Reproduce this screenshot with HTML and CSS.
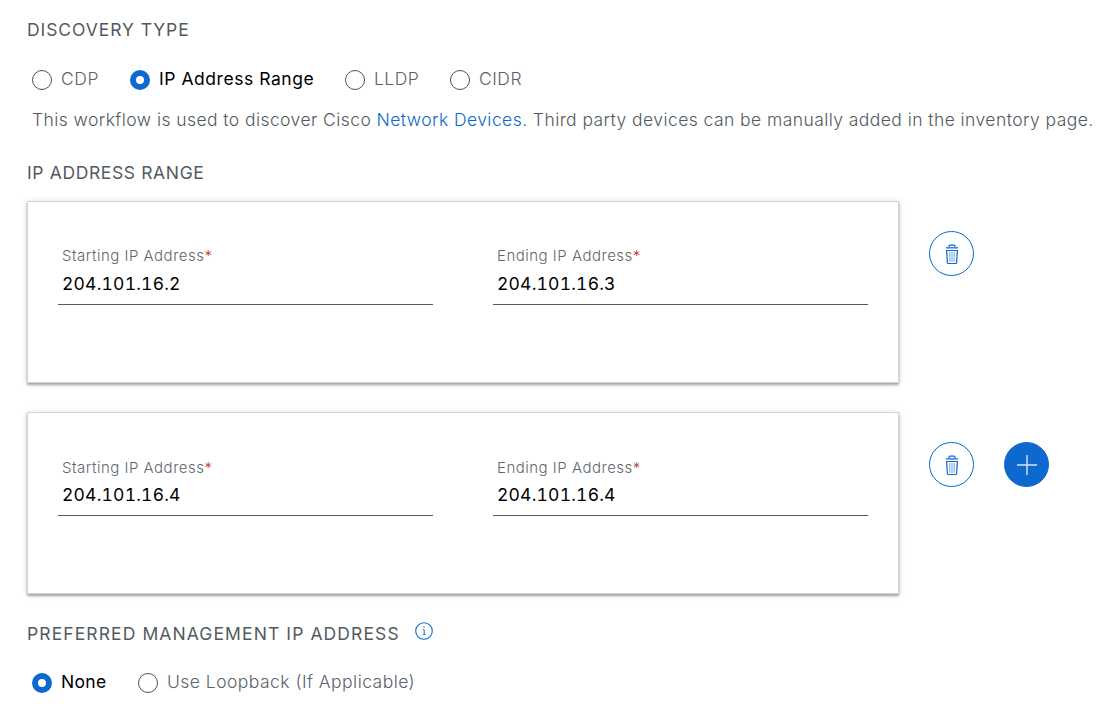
FILE: index.html
```html
<!DOCTYPE html>
<html lang="en">
<head>
<meta charset="utf-8">
<title>Discovery</title>
<link rel="stylesheet" href="styles.css">
</head>
<body>
<main class="form">
  <h2 class="heading heading-type"><span>DISCOVERY TYPE</span></h2>
  <div class="radios radios-type">
    <label class="radio opt-cdp"><i class="dot"></i><span>CDP</span></label>
    <label class="radio checked opt-range"><i class="dot"></i><span>IP Address Range</span></label>
    <label class="radio opt-lldp"><i class="dot"></i><span>LLDP</span></label>
    <label class="radio opt-cidr"><i class="dot"></i><span>CIDR</span></label>
  </div>
  <p class="note">This workflow is used to discover Cisco <a class="link">Network Devices</a>. Third party devices can be manually added in the inventory page.</p>
  <h2 class="heading heading-range"><span>IP ADDRESS RANGE</span></h2>

  <section class="row">
    <div class="card">
      <div class="field">
        <div class="label">Starting IP Address<b class="req">*</b></div>
        <div class="value">204.101.16.2</div>
      </div>
      <div class="field">
        <div class="label">Ending IP Address<b class="req">*</b></div>
        <div class="value">204.101.16.3</div>
      </div>
    </div>
    <div class="actions">
      <button class="round" aria-label="Delete">
        <svg class="trash" viewBox="0 0 14 21"><path d="M4 3V2.1Q4 1.2 4.9 1.2H9.1Q10 1.2 10 2.1V3"/><path class="lid" d="M1 3.8H13"/><path d="M1.6 6.5H12.4L11.6 18.6Q11.5 19.5 10.6 19.5H3.4Q2.5 19.5 2.4 18.6Z"/><path class="ribs" d="M4.8 8V18M7 8V18M9.2 8V18"/></svg>
      </button>
    </div>
  </section>

  <section class="row row-last">
    <div class="card">
      <div class="field">
        <div class="label">Starting IP Address<b class="req">*</b></div>
        <div class="value">204.101.16.4</div>
      </div>
      <div class="field">
        <div class="label">Ending IP Address<b class="req">*</b></div>
        <div class="value">204.101.16.4</div>
      </div>
    </div>
    <div class="actions">
      <button class="round" aria-label="Delete">
        <svg class="trash" viewBox="0 0 14 21"><path d="M4 3V2.1Q4 1.2 4.9 1.2H9.1Q10 1.2 10 2.1V3"/><path class="lid" d="M1 3.8H13"/><path d="M1.6 6.5H12.4L11.6 18.6Q11.5 19.5 10.6 19.5H3.4Q2.5 19.5 2.4 18.6Z"/><path class="ribs" d="M4.8 8V18M7 8V18M9.2 8V18"/></svg>
      </button>
      <button class="round solid" aria-label="Add">
        <svg class="plus" viewBox="0 0 20 20"><path d="M10 0V20M0 10H20"/></svg>
      </button>
    </div>
  </section>

  <h2 class="heading heading-mgmt"><span>PREFERRED MANAGEMENT IP ADDRESS</span>
    <svg class="info" viewBox="0 0 18 18"><circle cx="9" cy="9" r="8.3"/><path d="M8 7.5H9.2V12.6M7.8 12.6H10.6"/><circle class="tip" cx="9" cy="5.1" r=".75"/></svg>
  </h2>
  <div class="radios radios-mgmt">
    <label class="radio checked opt-none"><i class="dot"></i><span>None</span></label>
    <label class="radio opt-loop"><i class="dot"></i><span>Use Loopback (If Applicable)</span></label>
  </div>
</main>
</body>
</html>
```
FILE: styles.css
```css
* { box-sizing: border-box; }
body { margin: 0; background: #fff; color: #525a63; font-family: Inter, "Liberation Sans", sans-serif; font-size: 17.5px; line-height: 24px; }
.form { padding: 18px 0 0 27px; height: 707px; overflow: hidden; white-space: nowrap; }
.heading { display: flex; align-items: center; margin: 0; height: 24px; font-size: 17.5px; font-weight: 400; color: #525a5f; }
.heading-type { letter-spacing: 0.93px; }
.heading-range { letter-spacing: 0.63px; margin-bottom: 16px; }
.heading-mgmt { letter-spacing: 1.1px; margin-top: 28px; }
.radios { display: flex; height: 24px; padding-left: 5px; }
.radios-type { margin-top: 25px; }
.radios-mgmt { margin-top: 24px; }
.radio { display: flex; gap: 9px; font-weight: 300; color: #5a626a; }
.radio.checked { font-weight: 400; color: #000; }
.dot { flex: none; width: 20px; height: 20px; margin-top: 3px; border: 1px solid #4b5259; border-radius: 50%; }
.checked .dot { border: 6px solid #0d69cd; }
.opt-cdp { width: 98px; letter-spacing: 0.6px; }
.opt-range { width: 215px; letter-spacing: 0.55px; }
.opt-lldp { width: 105px; letter-spacing: 0.45px; }
.opt-cidr { letter-spacing: 0.5px; }
.opt-none { width: 106px; letter-spacing: 0.3px; }
.opt-loop { letter-spacing: 0.46px; }
.note { margin: 17px 0 29px 5px; font-weight: 300; letter-spacing: 0.43px; color: #525a5f; }
.link { color: #0d69cd; }
.row { display: flex; gap: 30px; }
.row-last { margin-top: 29px; }
.card { display: flex; gap: 60px; width: 872px; height: 182px; padding: 42px 30px 0; border: 1px solid #d3d5d8; box-shadow: 0 2px 2px rgba(0,0,0,.28), 0 1px 6px rgba(0,0,0,.16); }
.field { width: 375px; height: 61px; border-bottom: 1px solid #525a63; padding-left: 4px; }
.label { height: 24px; font-size: 15px; font-weight: 300; letter-spacing: 0.5px; color: #5f676f; }
.row-last .label { padding-top: 1px; }
.req { color: #c0392b; font-weight: 300; }
.value { margin-top: 4px; color: #000; letter-spacing: 0.2px; font-variant-numeric: tabular-nums; }
.actions { display: flex; gap: 30px; padding-top: 30px; }
.round { display: flex; align-items: center; justify-content: center; width: 45px; height: 45px; padding: 0; border: 1px solid #0d69cd; border-radius: 50%; background: #fff; }
.round.solid { background: #0d69cd; }
.trash { width: 14px; height: 21px; margin-top: 1px; fill: none; stroke: #0d69cd; stroke-width: 1.2; }
.lid { stroke-width: 1.6; stroke-opacity: .8; }
.ribs { stroke-opacity: .5; }
.plus { width: 20px; height: 20px; stroke: #d7e6f8; stroke-width: 1.4; }
.info { width: 18px; height: 18px; margin: -6px 0 0 15px; fill: none; stroke: #0d69cd; stroke-width: 1.1; }
.info path { stroke-width: 0.9; }
.tip { fill: #0d69cd; stroke: none; }
```
